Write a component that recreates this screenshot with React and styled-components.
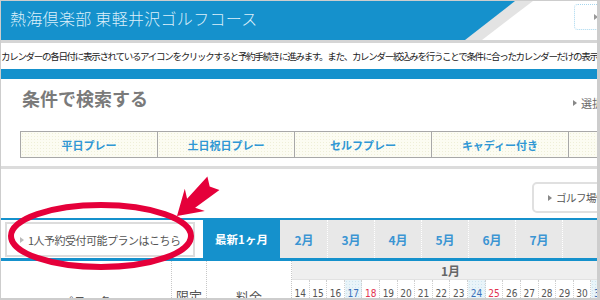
import React from "react";
import styled, { createGlobalStyle } from "styled-components";

const GlobalStyle = createGlobalStyle`
  * { box-sizing: border-box; }
  html, body { margin: 0; padding: 0; background: #fff; }
  body { font-family: "Noto Sans CJK JP", "Noto Sans", sans-serif; }
`;

const BLUE = "#1591cc";

const Frame = styled.div`
  position: relative;
  width: 600px;
  height: 300px;
  overflow: hidden;
  border: 1px solid #cdcdcd;
  border-right: 3px solid #cdcdcd;
  border-bottom: 2px solid #cdcdcd;
  background: #fff;
`;

const Page = styled.div`
  width: 640px;
  display: flex;
  flex-direction: column;
`;

const Header = styled.header`
  position: relative;
  height: 39px;
  display: flex;
  align-items: center;
  justify-content: space-between;
  padding-left: 9px;
  background: #fff;
  &::before {
    content: "";
    position: absolute;
    inset: 0;
    background: #e3e3e3;
    clip-path: polygon(0 0, 532px 0, 481px 100%, 0 100%);
  }
  &::after {
    content: "";
    position: absolute;
    inset: 0;
    background: ${BLUE};
    clip-path: polygon(0 0, 514px 0, 464px 100%, 0 100%);
  }
`;

const Title = styled.h1`
  position: relative;
  z-index: 1;
  margin: 0 0 6px;
  font-size: 16px;
  font-weight: 300;
  line-height: 1;
  letter-spacing: 0.3px;
  color: #dceffa;
`;

const HeadButton = styled.div`
  position: relative;
  z-index: 1;
  align-self: flex-start;
  margin: 3px 7px 0 0;
  width: 60px;
  height: 26px;
  border: 1px dotted #a6d6ee;
  border-radius: 4px;
  background: #fff;
  display: flex;
  align-items: center;
  padding-left: 19px;
`;

const Tri = styled.span`
  display: inline-block;
  flex: none;
  width: 0;
  height: 0;
  border-top: ${(p) => p.$s || 3}px solid transparent;
  border-bottom: ${(p) => p.$s || 3}px solid transparent;
  border-left: ${(p) => (p.$s || 3) * 1.4}px solid ${(p) => p.$c || "#999"};
`;

const HeaderRule = styled.div`
  height: 3px;
  background: #d5d5d5;
`;

const Notice = styled.p`
  margin: 0;
  height: 26px;
  line-height: 26px;
  font-size: 9.5px;
  letter-spacing: -1.3px;
  color: #222;
  white-space: nowrap;
  overflow: hidden;
`;

const BlueBar = styled.div`
  height: 10px;
  background: ${BLUE};
`;

const Search = styled.section`
  border-bottom: 3px solid #dcdcdc;
`;

const SearchHead = styled.div`
  display: flex;
  align-items: center;
  height: 38px;
  padding-left: 21px;
`;

const SearchTitle = styled.h2`
  margin: 0;
  font-size: 18px;
  font-weight: 700;
  color: #7a7a7a;
  line-height: 1;
`;

const SelectLink = styled.div`
  margin-left: auto;
  margin-top: 10px;
  width: 68px;
  display: flex;
  align-items: center;
  gap: 4px;
  font-size: 11px;
  color: #666;
  white-space: nowrap;
`;

const Tabs = styled.div`
  display: flex;
  height: 27px;
  margin: 14px 0 8px 19px;
  border: 1px solid #a8a8a8;
  border-right: none;
`;

const Tab = styled.div`
  flex: 0 0 137px;
  display: flex;
  align-items: center;
  justify-content: center;
  border-right: 1px solid #a8a8a8;
  background-color: #fcfcf2;
  background-image: radial-gradient(#efefd8 0.7px, transparent 0.9px);
  background-size: 3px 3px;
  font-size: 11px;
  font-weight: 700;
  color: #2f97d4;
  white-space: nowrap;
`;

const GolfRow = styled.div`
  display: flex;
  justify-content: flex-end;
  padding: 13px 0 5px;
`;

const GolfButton = styled.div`
  width: 109px;
  height: 31px;
  border: 2px solid #e0e0e0;
  border-radius: 5px;
  display: flex;
  align-items: center;
  gap: 4px;
  padding-left: 14px;
  font-size: 10.5px;
  letter-spacing: -0.5px;
  color: #555;
  white-space: nowrap;
`;

const MonthBar = styled.nav`
  display: flex;
  height: 43px;
  border-top: 2px solid ${BLUE};
  border-bottom: 3px solid ${BLUE};
`;

const OneBox = styled.div`
  margin: 2px 0 1px 4px;
  width: 190px;
  border: 2px solid #dcdcdc;
  display: flex;
  align-items: center;
  gap: 4px;
  padding-left: 13px;
  font-size: 11px;
  letter-spacing: -0.5px;
  color: #555;
  white-space: nowrap;
  overflow: hidden;
`;

const LatestTab = styled.div`
  margin-left: 8px;
  width: 77px;
  background: ${BLUE};
  color: #fff;
  font-size: 11.5px;
  font-weight: 700;
  display: flex;
  align-items: center;
  justify-content: center;
`;

const MonthTab = styled.div`
  flex: ${(p) => (p.$fill ? "1 1 auto" : "0 0 47px")};
  background: #e8e8e8;
  border-left: 1px dotted ${(p) => (p.$first ? "#e8e8e8" : "#fff")};
  display: flex;
  align-items: center;
  justify-content: center;
  font-size: 12px;
  font-weight: 700;
  color: #3b95d3;
`;

const Table = styled.div`
  display: grid;
  grid-template-columns: 171px 35px 85px 317px;
  grid-template-rows: 19px 44px;
`;

const HeadCell = styled.div`
  grid-row: 1 / span 2;
  display: flex;
  align-items: center;
  justify-content: center;
  padding-top: ${(p) => p.$pt || 0}px;
  border-right: 1px dotted #c8c8c8;
  font-size: 13px;
  color: #555;
`;

const MonthCell = styled.div`
  grid-column: 4;
  background: #efefef;
  border-bottom: 1px solid #e2e2e2;
  display: flex;
  align-items: center;
  justify-content: center;
  font-size: 12px;
  font-weight: 700;
  color: #666;
`;

const Days = styled.div`
  grid-column: 4;
  display: grid;
  grid-template-columns: repeat(18, 1fr);
`;

const Day = styled.div`
  display: flex;
  flex-direction: column;
  align-items: center;
  padding-top: 8px;
  border-right: 1px dotted #cfcfcf;
  font-family: "DejaVu Sans Condensed", "Liberation Sans", sans-serif;
  font-size: 10px;
  line-height: 12px;
  color: ${(p) => (p.$kind === "sat" ? "#3a6fb8" : p.$kind === "sun" ? "#e2334f" : "#555")};
  background-color: ${(p) => (p.$kind === "sat" ? "#e9f4f9" : "#fff")};
  background-image: ${(p) =>
    p.$kind === "sat" ? "radial-gradient(#cde5ef 0.7px, transparent 0.9px)" : "none"};
  background-size: 3px 3px;
`;

const Wd = styled.span`
  margin-top: 6px;
  font-family: "Noto Sans CJK JP", sans-serif;
`;

const Overlay = styled.svg`
  position: absolute;
  top: 0;
  left: 0;
  pointer-events: none;
`;

const days = [
  [14, "水"], [15, "木"], [16, "金"], [17, "土"], [18, "日"], [19, "月"],
  [20, "火"], [21, "水"], [22, "木"], [23, "金"], [24, "土"], [25, "日"],
  [26, "月"], [27, "火"], [28, "水"], [29, "木"], [30, "金"], [31, "土"],
];

const searchTabs = ["平日プレー", "土日祝日プレー", "セルフプレー", "キャディー付き", "2サム保証"];
const months = ["2月", "3月", "4月", "5月", "6月", "7月"];

export default function App() {
  return (
    <>
      <GlobalStyle />
      <Frame>
        <Page>
          <Header>
            <Title>熱海倶楽部 東軽井沢ゴルフコース</Title>
            <HeadButton>
              <Tri $c="#999" />
            </HeadButton>
          </Header>
          <HeaderRule />
          <Notice>
            カレンダーの各日付に表示されているアイコンをクリックすると予約手続きに進みます。また、カレンダー絞込みを行うことで条件に合ったカレンダーだけの表示ができます。
          </Notice>
          <BlueBar />
          <Search>
            <SearchHead>
              <SearchTitle>条件で検索する</SearchTitle>
              <SelectLink>
                <Tri $c="#888" />
                選択条件をクリア
              </SelectLink>
            </SearchHead>
            <Tabs>
              {searchTabs.map((t) => (
                <Tab key={t}>{t}</Tab>
              ))}
            </Tabs>
          </Search>
          <GolfRow>
            <GolfButton>
              <Tri $c="#888" />
              ゴルフ場情報
            </GolfButton>
          </GolfRow>
          <MonthBar>
            <OneBox>
              <Tri $c="#bbb" />
              1人予約受付可能プランはこちら
            </OneBox>
            <LatestTab>最新1ヶ月</LatestTab>
            {months.map((m, i) => (
              <MonthTab key={m} $first={i === 0}>
                {m}
              </MonthTab>
            ))}
            <MonthTab $fill />
          </MonthBar>
          <Table>
            <HeadCell $pt={17}>プラン名</HeadCell>
            <HeadCell $pt={5}>限定</HeadCell>
            <HeadCell $pt={7}>料金</HeadCell>
            <MonthCell>1月</MonthCell>
            <Days>
              {days.map(([d, w]) => (
                <Day key={d} $kind={w === "土" ? "sat" : w === "日" ? "sun" : ""}>
                  {d}
                  <Wd>{w}</Wd>
                </Day>
              ))}
            </Days>
          </Table>
        </Page>
        <Overlay width="600" height="300" viewBox="0 0 600 300">
          <ellipse cx="100" cy="235" rx="90" ry="31" fill="none" stroke="#e5003a" strokeWidth="6" />
          <g transform="translate(176 215) rotate(138)">
            <polygon
              points="0,0 -24,-15 -19,-6 -49,-9 -44,0 -49,9 -19,6 -24,15"
              fill="#e5003a"
            />
          </g>
        </Overlay>
      </Frame>
    </>
  );
}
